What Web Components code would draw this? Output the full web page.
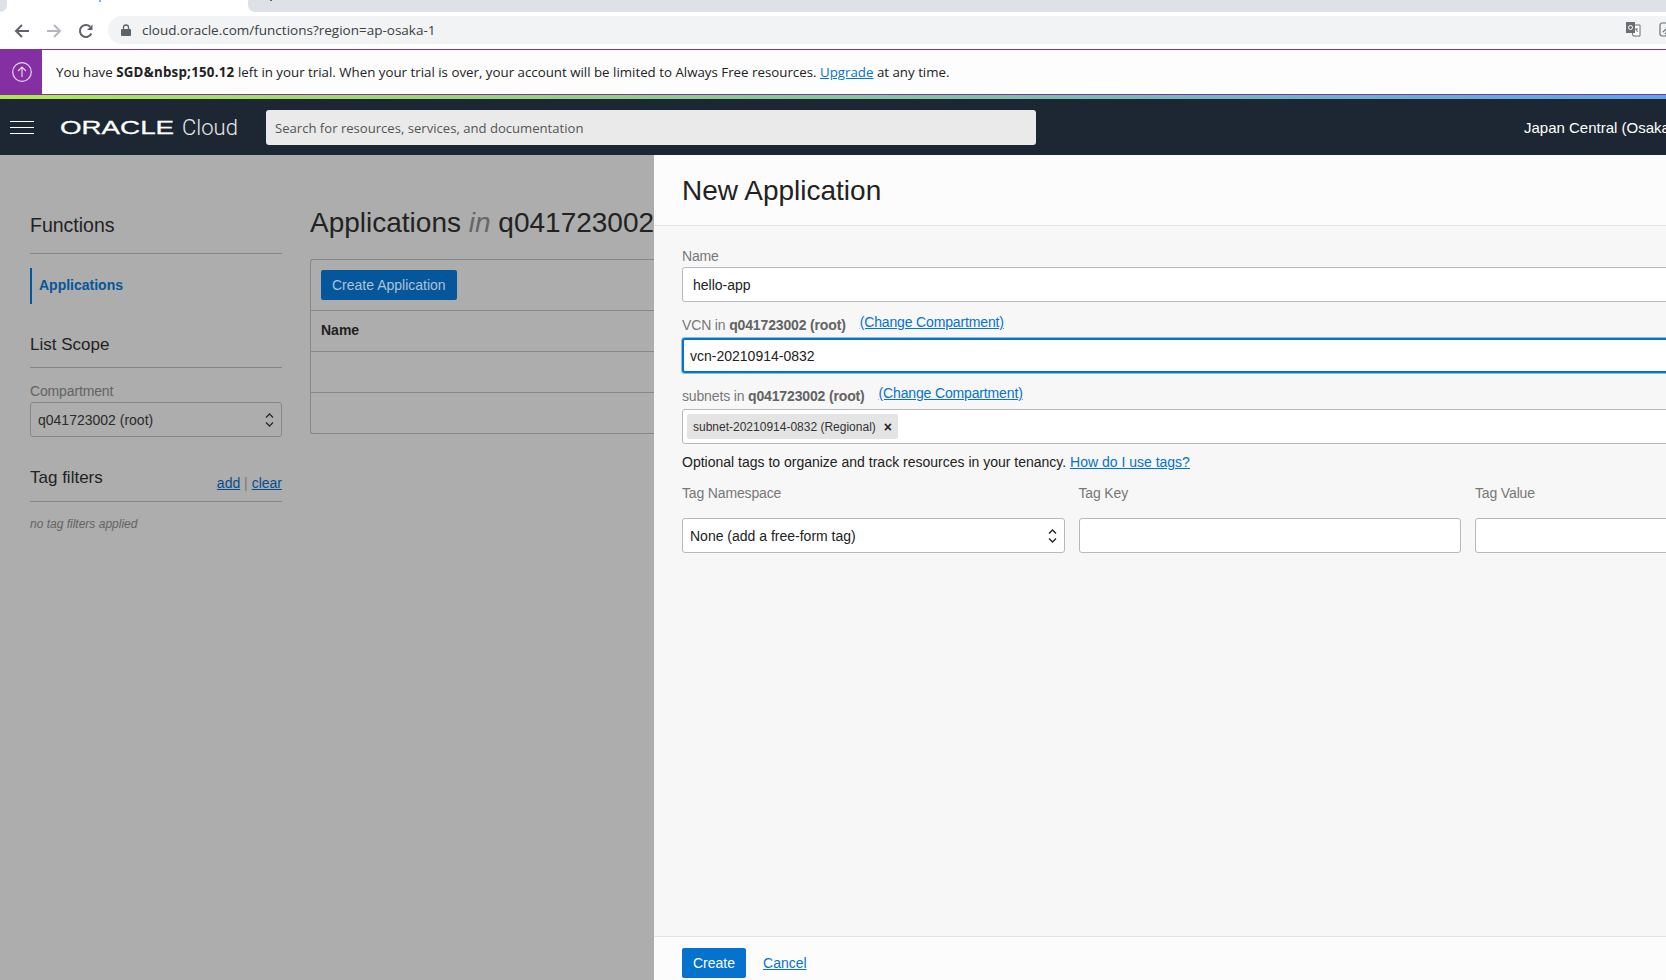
<!DOCTYPE html>
<html>
<head>
<meta charset="utf-8">
<title>New Application</title>
<style>
    html, body { margin: 0; height: 100%; overflow: hidden; }
    body { font-family: "Liberation Sans", Arial, sans-serif; width: 1666px; height: 980px; display: flex; flex-direction: column; }
    .workspace { flex: 1; display: flex; min-height: 0; }
</style>
</head>
<body>
<browser-bar url="cloud.oracle.com/functions?region=ap-osaka-1"></browser-bar>
<trial-banner></trial-banner>
<oci-navbar region="Japan Central (Osaka)"></oci-navbar>
<div class="workspace">
    <functions-page></functions-page>
    <new-application-panel></new-application-panel>
</div>

<script>
function makeTemplate(sHtml) {
    const template = document.createElement('template');
    template.innerHTML = sHtml;
    return template;
}

class BaseElement extends HTMLElement {
    constructor(template) {
        super();
        this.attachShadow({mode: 'open'});
        this.shadowRoot.appendChild(template.content.cloneNode(true));
    }
}

const browserBarTemplate = makeTemplate(`
    <style>
        :host { display: block; height: 49px; background: #fff; overflow: hidden; }
        .tabs { display: flex; height: 12px; background: #fff; }
        .tab-left { width: 7px; background: #dee1e6; border-bottom-right-radius: 7px; }
        .tab-active { width: 241px; background: #fff; position: relative; }
        .tab-active::after { content: ''; position: absolute; left: 92px; top: 0; width: 2px; height: 2px; background: #7db7e8; }
        .tab-rest { flex: 1; background: #dee1e6; border-bottom-left-radius: 7px; position: relative; }
        .tab-rest::after { content: ''; position: absolute; left: 22px; top: 0; width: 2px; height: 1px; background: #666; }
        .toolbar { display: flex; align-items: center; height: 37px; }
        .nav { width: 32px; display: flex; justify-content: center; flex: none; }
        .nav:first-child { margin-left: 6px; }
        .omnibox { margin-left: 6px; flex: 1; height: 28px; background: #f1f3f4; border-radius: 14px 0 0 14px; display: flex; align-items: center; padding-left: 13px; margin-bottom: 2px; }
        .url { margin-left: 11px; font: 13.5px "Open Sans", sans-serif; color: #3c4043; }
        .spacer { flex: 1; }
        .ext { display: flex; margin-right: -8px; gap: 18px; align-items: center; }
    </style>
    <div class="tabs"><div class="tab-left"></div><div class="tab-active"></div><div class="tab-rest"></div></div>
    <div class="toolbar">
        <div class="nav"><svg width="16" height="16" viewBox="0 0 16 16" fill="none" stroke="#5f6368" stroke-width="2"><path d="M15 8H2M8 2L2 8l6 6"/></svg></div>
        <div class="nav"><svg width="16" height="16" viewBox="0 0 16 16" fill="none" stroke="#b4b7bb" stroke-width="2"><path d="M1 8h13M8 2l6 6-6 6"/></svg></div>
        <div class="nav"><svg width="16" height="16" viewBox="0 0 16 16" fill="none" stroke="#5f6368" stroke-width="2"><path d="M13.4 10.5A6 6 0 1 1 12.2 3.700"/><path d="M14.500 1.500v5.500H9z" fill="#5f6368" stroke="none"/></svg></div>
        <div class="omnibox">
            <svg width="10" height="12" viewBox="0 0 10 12"><path d="M1 5h8a1 1 0 0 1 1 1v5a1 1 0 0 1-1 1H1a1 1 0 0 1-1-1V6a1 1 0 0 1 1-1z" fill="#5f6368"/><path d="M2.500 5V3.500a2.500 2.500 0 0 1 5 0V5" fill="none" stroke="#5f6368" stroke-width="1.300"/></svg>
            <span class="url" id="url"></span>
            <span class="spacer"></span>
            <span class="ext">
                <svg width="15" height="15" viewBox="0 0 15 15"><path d="M5 3h9v11H7z" fill="#fff" stroke="#6b6f73"/><rect x="0" y="0" width="9" height="11" fill="#6b6f73"/><circle cx="4.500" cy="5.500" r="2" fill="none" stroke="#fff" stroke-width="1"/><path d="M9 7h3M10 7l1.500 3" stroke="#6b6f73" fill="none"/></svg>
                <svg width="15" height="15" viewBox="0 0 15 15" fill="none" stroke="#6b6f73" stroke-width="1.200"><rect x="1" y="1" width="13" height="13" rx="2"/><path d="M4 10l6-6 2 2-6 6"/></svg>
            </span>
        </div>
    </div>
`);
customElements.define('browser-bar', class extends BaseElement {
    constructor() {
        super(browserBarTemplate);
        this.shadowRoot.getElementById('url').textContent = this.getAttribute('url');
    }
});

const trialBannerTemplate = makeTemplate(`
    <style>
        :host { display: flex; height: 46px; box-sizing: border-box; border-top: 1px solid #842fa2; border-bottom: 1px solid #842fa2; background: #fdfdfd; align-items: stretch; font: 13.3px "Open Sans", sans-serif; color: #222; }
        .icon { width: 42px; box-sizing: border-box; padding-left: 2px; background: #842fa2; display: flex; align-items: center; justify-content: center; margin: -1px 0; }
        .msg { margin-left: 14px; align-self: center; }
        b { font-weight: 700; letter-spacing: 0.25px; }
        a { color: #0572ce; }
    </style>
    <div class="icon"><svg width="20" height="20" viewBox="0 0 20 20" fill="none" stroke="#e8d5ef" stroke-width="1.200"><circle cx="10" cy="10" r="9.300"/><path d="M10 15V5M6 9l4-4 4 4"/></svg></div>
    <div class="msg">You have <b>SGD&amp;nbsp;150.12</b> left in your trial. When your trial is over, your account will be limited to Always Free resources. <a href="#">Upgrade</a> at any time.</div>
`);
customElements.define('trial-banner', class extends BaseElement {
    constructor() { super(trialBannerTemplate); }
});

const navbarTemplate = makeTemplate(`
    <style>
        :host { display: block; background: #1d2733; color: #fff; }
        .rainbow { height: 4px; background: linear-gradient(90deg, #aeea4a, #5ba6ea); }
        .bar { height: 56px; display: flex; align-items: center; }
        .burger { margin-left: 10px; width: 24px; display: flex; flex-direction: column; gap: 5px; }
        .burger i { display: block; height: 1px; background: #fff; }
        .logo { margin-left: 26px; width: 122px; padding-top: 1px; display: block; white-space: nowrap; }
        .logo span { display: inline-block; font: 400 19px "Liberation Sans", sans-serif; -webkit-text-stroke: 0.3px #fff; transform: scaleX(1.46); transform-origin: left center; }
        .cloud { font: 300 22px Roboto, sans-serif; color: #e8e8e8; width: 55px; }
        .search { margin-left: 29px; width: 770px; height: 35px; box-sizing: border-box; background: #eaeaea; border-radius: 3px; color: #555; font: 13.1px "Open Sans", sans-serif; padding-left: 9px; line-height: 36px; }
        .region { margin-left: auto; width: 142px; white-space: nowrap; overflow: hidden; font-size: 15px; }
    </style>
    <div class="rainbow"></div>
    <div class="bar">
        <div class="burger"><i></i><i></i><i></i></div>
        <div class="logo"><span>ORACLE</span></div>
        <div class="cloud">Cloud</div>
        <div class="search">Search for resources, services, and documentation</div>
        <div class="region" id="region"></div>
    </div>
`);
customElements.define('oci-navbar', class extends BaseElement {
    constructor() {
        super(navbarTemplate);
        this.shadowRoot.getElementById('region').textContent = this.getAttribute('region');
    }
});

const spinnerSvg = `<svg width="9" height="16" viewBox="0 0 9 16" fill="none" stroke="currentColor" stroke-width="1.300"><path d="M1 5.500L4.500 2 8 5.500M1 10.500L4.500 14 8 10.500"/></svg>`;

const pageTemplate = makeTemplate(`
    <style>
        :host { display: flex; width: 654px; flex: none; background: #adadad; overflow: hidden; color: #1f1f1f; font-size: 14px; }
        a { color: #034f8f; }
        .side { width: 252px; margin-left: 30px; flex: none; padding-top: 58px; }
        .side h3 { margin: 0; font-weight: 400; font-size: 17px; line-height: 24px; color: #222; }
        .rule { border-bottom: 1px solid #828589; }
        .side .t1 { padding-bottom: 16px; font-size: 19.5px; }
        .nav { margin-top: 14px; height: 36px; border-left: 2px solid #05569a; padding-left: 7px; line-height: 34px; font-weight: 700; color: #05569a; }
        .side .t2 { margin-top: 29px; padding-bottom: 10px; }
        .lbl { margin-top: 14px; color: #636363; line-height: 18px; letter-spacing: -0.15px; }
        .sel { margin-top: 2px; height: 35px; box-sizing: border-box; border: 1px solid #84888c; border-radius: 3px; display: flex; align-items: center; justify-content: space-between; padding: 0 7px; color: #2b2b2b; }
        .tags { margin-top: 29px; display: flex; justify-content: space-between; padding-bottom: 11px; align-items: flex-end; }
        .links { font-size: 14px; color: #777; line-height: 16px; position: relative; top: 1px; }
        .none { margin-top: 15px; font-size: 12px; font-style: italic; color: #636363; }
        .content { margin-left: 28px; width: 420px; flex: none; padding-top: 51px; white-space: nowrap; }
        h1 { margin: 0; font-weight: 400; font-size: 28px; line-height: 34px; color: #222; }
        h1 em { color: #666; }
        .card { margin-top: 19px; border: 1px solid #84888c; border-right: 0; border-radius: 3px 0 0 3px; }
        .toolbar { padding: 10px; height: 30px; border-bottom: 1px solid #84888c; }
        button { border: 0; border-radius: 2px; background: #05569a; color: #adc2d6; font: 14px "Liberation Sans", sans-serif; height: 30px; padding: 0 11px; display: block; }
        .row { height: 40px; border-bottom: 1px solid #84888c; padding-left: 10px; line-height: 38px; font-weight: 700; }
        .row:last-child { border-bottom: 0; }
    </style>
    <div class="side">
        <h3 class="t1 rule">Functions</h3>
        <div class="nav">Applications</div>
        <h3 class="t2 rule">List Scope</h3>
        <div class="lbl">Compartment</div>
        <div class="sel"><span>q041723002 (root)</span>${spinnerSvg}</div>
        <div class="tags rule"><h3>Tag filters</h3><span class="links"><a href="#">add</a> | <a href="#">clear</a></span></div>
        <div class="none">no tag filters applied</div>
    </div>
    <div class="content">
        <h1>Applications <em>in</em> q041723002</h1>
        <div class="card">
            <div class="toolbar"><button>Create Application</button></div>
            <div class="row">Name</div>
            <div class="row"></div>
            <div class="row"></div>
        </div>
    </div>
`);
customElements.define('functions-page', class extends BaseElement {
    constructor() { super(pageTemplate); }
});

const fieldTemplate = makeTemplate(`
    <style>
        :host { display: block; color: #777; font-size: 14px; }
        .label { display: block; line-height: 18px; letter-spacing: -0.15px; }
        .box { display: flex; align-items: center; justify-content: space-between; height: 35px; box-sizing: border-box; margin-top: var(--label-gap, 2px); background: #fff; border: 1px solid #b5b8bc; border-radius: 3px; color: #222; padding: 0 var(--field-pad, 10px); }
        :host([focused]) .box { border: 2px solid #0572ce; box-shadow: 0 0 0 1px #8dbce6; padding-left: 6px; }
    </style>
    <span class="label"><slot name="label"></slot></span>
    <div class="box"><slot></slot></div>
`);
customElements.define('form-field', class extends BaseElement {
    constructor() { super(fieldTemplate); }
});

const panelTemplate = makeTemplate(`
    <style>
        :host { display: flex; flex-direction: column; flex: 1; min-width: 0; background: #f7f7f7; overflow: hidden; color: #222; font-size: 14px; }
        header { height: 71px; box-sizing: border-box; background: #fcfcfc; border-bottom: 1px solid #e4e4e4; padding-left: 28px; font-size: 28px; line-height: 72px; }
        .body { flex: 1; padding: 21px 0 0 28px; width: 1180px; display: flex; flex-direction: column; }
        footer { height: 44px; box-sizing: border-box; background: #fcfcfc; border-top: 1px solid #e4e4e4; padding: 11px 0 0 28px; display: flex; gap: 17px; }
        a { color: #0572ce; }
        form-field b { color: #636363; }
        .change { margin-left: 14px; position: relative; top: -3px; }
        .gap { margin-top: 14px; --label-gap: 4px; }
        .chip { background: #e4e4e4; border-radius: 2px; font-size: 12px; height: 25px; box-sizing: border-box; padding: 1px 6px 0; color: #333; display: flex; gap: 8px; align-items: center; }
        .chip b { color: #222; font-size: 14px; }
        .hint { margin-top: 9px; line-height: 18px; }
        .grid { display: grid; grid-template-columns: 382.5px 382.5px 382.5px; column-gap: 14px; margin-top: 13px; color: #777; }
        .grid .spaced { line-height: 18px; margin-bottom: 16px; letter-spacing: -0.15px; }
        .box { height: 35px; box-sizing: border-box; background: #fff; border: 1px solid #b5b8bc; border-radius: 3px; color: #222; padding: 0 7px; display: flex; align-items: center; justify-content: space-between; }
        button { border: 0; border-radius: 2px; background: #0572ce; color: #fff; font: 14px "Liberation Sans", sans-serif; height: 30px; padding: 0 11px; }
        footer a { line-height: 30px; }
    </style>
    <header>New Application</header>
    <div class="body">
        <form-field><span slot="label">Name</span>hello-app</form-field>
        <form-field class="gap" focused><span slot="label">VCN in <b>q041723002 (root)</b><a class="change" href="#">(Change Compartment)</a></span>vcn-20210914-0832</form-field>
        <form-field class="gap" style="--field-pad: 4px"><span slot="label">subnets in <b>q041723002 (root)</b><a class="change" href="#">(Change Compartment)</a></span><span class="chip">subnet-20210914-0832 (Regional) <b>×</b></span></form-field>
        <div class="hint">Optional tags to organize and track resources in your tenancy. <a href="#">How do I use tags?</a></div>
        <div class="grid">
            <div><div class="spaced">Tag Namespace</div><div class="box">None (add a free-form tag)${spinnerSvg}</div></div>
            <div><div class="spaced">Tag Key</div><div class="box"></div></div>
            <div><div class="spaced">Tag Value</div><div class="box"></div></div>
        </div>
    </div>
    <footer><button>Create</button><a href="#">Cancel</a></footer>
`);
customElements.define('new-application-panel', class extends BaseElement {
    constructor() { super(panelTemplate); }
});
</script>
</body>
</html>
